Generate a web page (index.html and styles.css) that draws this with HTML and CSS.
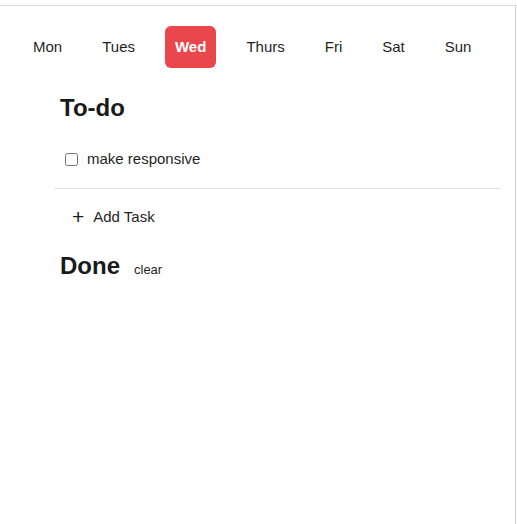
FILE: index.html
```html
<!DOCTYPE html>
<html>
<head>
<meta charset="utf-8">
<link rel="stylesheet" href="styles.css">
</head>
<body>
<div class="frame">
  <nav class="days">
    <button class="day">Mon</button>
    <button class="day">Tues</button>
    <button class="day active">Wed</button>
    <button class="day">Thurs</button>
    <button class="day">Fri</button>
    <button class="day">Sat</button>
    <button class="day">Sun</button>
  </nav>
  <main class="lists">
    <h2 class="heading">To-do</h2>
    <ul class="tasks">
      <li class="task"><input type="checkbox" class="check"><span class="task-text">make responsive</span></li>
    </ul>
    <div class="sep"></div>
    <button class="add"><span class="plus">+</span><span>Add Task</span></button>
    <div class="done-head">
      <h2 class="heading">Done</h2>
      <button class="clear">clear</button>
    </div>
  </main>
</div>
</body>
</html>
```

FILE: styles.css
```css
html, body {
  margin: 0;
  padding: 0;
  background: #fff;
}
body {
  font-family: "Liberation Sans", Arial, sans-serif;
  color: #1f1f1f;
}
.frame {
  margin-top: 5px;
  width: 516px;
  height: 519px;
  box-sizing: border-box;
  border-top: 1px solid #dddddd;
  border-right: 1px solid #cfcfcf;
}
.days {
  display: flex;
  gap: 20px;
  padding: 20px 0 0 23px;
}
.day {
  font-family: inherit;
  font-size: 15px;
  line-height: 18px;
  color: #1f1f1f;
  background: none;
  border: 0;
  border-radius: 6px;
  padding: 12px 10px;
  margin: 0;
}
.day.active {
  background: #e9474b;
  color: #fff;
  font-weight: bold;
}
.lists {
  padding: 0 14px 0 54px;
}
.heading {
  margin: 0;
  font-size: 24px;
  line-height: 28px;
  font-weight: bold;
  color: #1a1a1a;
}
.lists > .heading {
  margin: 26px 0 0 6px;
}
.tasks {
  list-style: none;
  margin: 28px 0 0 0;
  padding: 0 0 0 10px;
}
.task {
  display: flex;
  align-items: center;
  font-size: 15px;
  line-height: 18px;
}
.check {
  width: 13px;
  height: 13px;
  margin: 0 9px 0 1px;
}
.sep {
  margin-top: 20px;
  height: 1px;
  background: #e3e3e3;
}
.add {
  display: flex;
  align-items: center;
  gap: 9px;
  margin: 19px 0 0 18px;
  padding: 0;
  border: 0;
  background: none;
  font-family: inherit;
  font-size: 15px;
  line-height: 18px;
  color: #1f1f1f;
}
.plus {
  font-size: 21px;
  line-height: 18px;
  font-weight: 300;
}
.done-head {
  display: flex;
  align-items: baseline;
  gap: 14px;
  margin: 26px 0 0 6px;
}
.clear {
  font-family: inherit;
  font-size: 13px;
  padding: 0;
  border: 0;
  background: none;
  color: #1f1f1f;
}
```
